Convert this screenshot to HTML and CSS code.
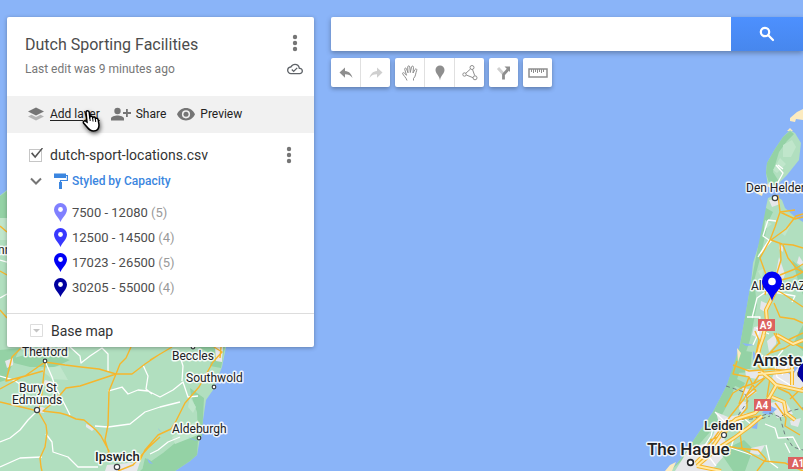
FILE: index.html
```html
<!DOCTYPE html>
<html lang="en">
<head>
<meta charset="utf-8">
<title>Dutch Sporting Facilities</title>
<link rel="stylesheet" href="styles.css">
</head>
<body>
<svg class="map" viewBox="0 0 803 471" preserveAspectRatio="xMidYMid slice" role="img" aria-label="Map">
  <!-- England -->
  <path class="land" d="M-2 197L7 190L40 170L150 180L220 260L226 347L222 367L213 390L206 400L203 420L200 438L197 455L190 461L175 471H-2Z"/>
  <path class="wood" d="M0 196L7 191V218H0ZM14 358L35 352L55 355L70 360L55 367L30 367L14 363ZM0 350L20 348L12 365L6 380L0 382ZM190 388L204 398L202 436L198 440L197 455L190 461L175 471H140L150 462L163 453L180 439L198 434L197 412L191 395ZM198 347H225L221 368L210 366L212 354ZM145 458L160 465L152 471H142Z"/>
  <path class="wood-light" d="M0 218H7V240H0ZM40 369L60 366L68 380L52 379ZM190 425L198 420V435L175 444L172 437ZM190 397L196 407L193 413L188 407Z"/>
  <path class="urban" d="M5 361L13 358V365L7 368ZM36 405L45 408L44 413L36 412ZM86 424L95 428L92 431L86 427ZM107 465L140 462L137 471H105ZM45 380L53 382L50 386L43 384ZM223 347H215L216 361L222 362Z"/>
  <path class="road-white" d="M0 260L7 262M0 298L7 294M45 361L52 377L55 386L66 407L70 415M0 376L14 380L24 387M70 347L80 356L81 363L90 356L102 348L108 354V371M143 365L148 376L146 389L152 394M108 391L122 387L128 394L138 390L148 391L160 397L173 390L183 382L188 397L198 396M36 412L28 420L20 430L10 438L0 442M46 434L52 442L53 452L68 457L78 467L98 467M0 467L20 458L42 457M95 426L108 427L130 424L145 412L160 407L180 402M178 350L183 366L182 381M150 454L158 450L168 442L180 437"/>
  <path class="road-yellow" d="M0 226L7 232M0 271L7 275M0 310L7 318M22 347L12 357L6 381L25 376L45 362L65 365L81 367L99 369L116 374L132 374L145 364L160 354M116 374L120 364L126 358L131 347M116 374L92 382L80 386L66 388L55 401L43 411L60 413L67 415L76 419L84 420L96 430L101 436L109 451L107 455M116 374L109 391L108 425L105 440L109 453M45 363L43 382L41 402L38 411L0 402M0 389L22 377L43 371M38 411L46 425L47 433L45 447L40 458L41 467L42 471M140 460L145 450L158 435L171 429L176 421L185 403L199 387L213 362L222 352L214 347M118 471L133 465L140 457L148 448L160 437M150 360L172 347M221 347L220 358"/>
  <path class="water" d="M158 428L163 434L159 430ZM147 458L153 464L149 463ZM188 437L198 441L193 440Z"/>

  <!-- Netherlands -->
  <path class="sand" d="M790 118L797 112L803 109V120L796 119L795 122L790 121ZM766 183L762 196L756 193ZM787 131L790 128L793 131Z"/>
  <path class="land" d="M790 130L795 133L801 143L799 160L787 175L780 182L776 188L768 187L766 173L767 163L775 149L783 137ZM768 198L775 195L782 200L785 208L795 217L803 222V471H670L680 460L713 412L727 385L735 363L740 345L745 318L748 300L751 283L753 263L758 247L765 227L766 207Z"/>
  <path class="wood" d="M790 131L794 134L787 141L779 152L773 172L778 180L776 187L769 183L766 173L767 163L775 149L783 137ZM766 208L773 212L768 222L761 255L754 281L757 305L750 340L740 370L731 398L717 424L695 449L670 471L680 460L713 412L727 385L740 345L751 283L758 247ZM739 350L752 352L750 372L738 373ZM733 377L745 383L742 389L731 384ZM803 325L794 342L803 351ZM792 260L803 270V295L798 280ZM720 452L744 440L753 449L745 471H733Z"/>
  <path class="wood-light" d="M783 145L792 140L796 147L791 157L783 157ZM780 158L786 164L777 173L773 170ZM758 271L763 269L762 279ZM765 220L772 224L764 230ZM780 232L790 226L785 236Z"/>
  <path class="urban" d="M769 200L779 199L780 204L772 207ZM779 244L783 247L783 252L779 249ZM799 256L803 262L802 266L797 263ZM761 301L768 304L765 312L760 309ZM754 327L765 325L762 340L752 335ZM767 341L777 333L776 344L769 352ZM745 369L765 371L762 380L746 377ZM777 367L803 364V392L780 388L772 378ZM742 387L757 392L745 399ZM716 412L728 417L748 413L738 424L717 426L710 442L718 451L728 445L722 435ZM690 447L714 442L723 457L711 471H675ZM770 403L785 400L793 414L777 418ZM790 421L801 418L798 427L791 425ZM751 448L765 445L759 455L750 453ZM779 257L785 274L780 290L774 284ZM740 401L747 402L743 415L739 409Z"/>
  <path class="sand" d="M737 348L741 353L738 362ZM768 183L771 188L767 186ZM670 465L676 462L672 471H665Z"/>
  <path class="water" d="M742 343L755 345L746 346ZM768 405L777 409L770 415L762 413ZM751 428L758 421L757 429ZM787 372L803 360L792 376ZM753 351L758 356L753 360ZM788 459L793 462L787 463Z"/>
  <path class="border" d="M726 386L744 392L748 401L739 414L737 420L752 419L770 413L780 417L790 411L803 408M780 417L785 435L793 447L803 450M755 421L770 416"/>
  <path class="road-white" d="M776 165L783 173L777 184M778 165L783 169M768 220L776 221M768 220L763 236L769 240L758 257M772 240L759 255M752 318L757 298L764 293L773 292L795 296L792 302M747 317H760L758 334L753 345M756 328L769 334M715 412L728 425L744 420M714 424L711 436L702 450M740 415L752 425M734 437L731 448L752 455M765 424L775 428L778 438L793 437L800 450M785 443L790 453M783 350L774 361L777 377L790 385M791 363L803 369M787 366L782 375M763 355L755 366M697 464L710 458L716 466M766 445L770 462L778 468"/>
  <path class="road-yellow" d="M778 195L780 212L775 227L770 240L760 258L768 280L765 295M780 212L795 219L803 217M780 212L795 210M771 240L786 229L796 216L803 214M771 240L782 244L793 245L803 248M783 245L788 258L797 269L803 272M780 244L781 260L777 273L773 295M780 275L795 269L803 264M770 300L781 280L793 277L803 272M777 290L785 295L803 307M774 303L780 317L794 319L803 323M803 333L788 340M755 331L759 340L756 354L759 367L770 378L767 397M774 333L779 343L770 353L763 358M770 353L785 348L793 343L803 348M780 344L776 333M733 365L749 371L761 370L771 369L790 371M737 361L733 374L749 377L756 391L747 398L747 408L734 423M761 372L752 386L744 399L732 414L714 438L700 454M749 377L739 404M764 378L755 383L743 387L733 393L725 407M775 403L786 418L785 426L800 435M790 399L803 387M745 397L765 378M718 424L735 420L760 416M710 450L726 446L737 448L758 450L766 459L757 471M739 424L742 449L764 461L785 463L803 471M778 388L789 393L803 410M710 440L724 435L730 428"/>
  <path class="motorway" d="M762 340L767 322L766 310L776 290L777 278M757 358L760 346L764 335M761 372L770 379L776 385L803 391M777 384L769 398L755 413L736 419L724 430L713 446L696 463M762 416L749 427L734 438L717 449L697 466M697 466L721 471M792 364V385M758 374L780 372L794 370M772 397L784 402L786 413L795 420M777 335L793 344L803 340"/>
  <path class="motorway-core" d="M762 340L767 322L766 310L776 290L777 278M757 358L760 346L764 335M761 372L770 379L776 385L803 391M777 384L769 398L755 413L736 419L724 430L713 446L696 463M762 416L749 427L734 438L717 449L697 466M697 466L721 471M792 364V385M758 374L780 372L794 370M772 397L784 402L786 413L795 420M777 335L793 344L803 340"/>

  <g class="dots">
    <circle cx="45" cy="361" r="1.8"/><circle cx="37" cy="410" r="2.6"/><circle cx="117" cy="467" r="2.7"/>
    <circle cx="193" cy="347" r="1.8"/><circle cx="214" cy="387" r="1.8"/><circle cx="199" cy="438" r="1.8"/>
    <circle cx="775" cy="198" r="2.7"/><circle cx="724" cy="435" r="2.5"/><circle class="city-dot" cx="690.500" cy="462.500" r="2.9"/>
    <circle class="city-dot" cx="801" cy="374" r="2.9"/>
  </g>
  <g class="shields">
    <rect x="758" y="319" width="17" height="12"/><text x="766" y="329">A9</text>
    <rect x="754" y="399" width="17" height="12"/><text x="762" y="409">A4</text>
    <rect x="788" y="457" width="24" height="12"/><text x="801" y="467">A12</text>
  </g>
  <g class="places">
    <text x="-2" y="254">nn</text>
    <text x="22" y="356">Thetford</text>
    <text x="19" y="392">Bury St</text>
    <text x="12" y="404">Edmunds</text>
    <text x="172" y="360">Beccles</text>
    <text x="186" y="382">Southwold</text>
    <text x="172" y="433">Aldeburgh</text>
    <text x="746" y="192">Den Helder</text>
    <text x="751" y="290">Alkmaa</text>
    <text x="791" y="290">AZ</text>
    <text class="town" x="95" y="461">Ipswich</text>
    <text class="town" x="704" y="430">Leiden</text>
    <text class="city" x="647" y="455">The Hague</text>
    <text class="city" x="753" y="366">Amsterdam</text>
  </g>
  <path class="pin-mid" d="M772 301C770 292 762 289 762 281.500A10 10 0 0 1 782 281.500C782 289 774 292 772 301Z"/><circle cx="772" cy="281.500" r="3.800" fill="#fff"/>
  <path class="pin-dark" d="M808 391C806 383 798 380 798 372A10 10 0 0 1 818 372C818 380 810 383 808 391Z"/>
</svg>

<div class="app">
  <aside class="panel">
    <header class="heading">
      <div class="heading-text">
        <h1>Dutch Sporting Facilities</h1>
        <p>Last edit was 9 minutes ago</p>
      </div>
      <div class="heading-side">
        <button class="plain" aria-label="Map options"><svg class="kebab" viewBox="0 0 6 18"><circle cx="3" cy="3" r="2.200"/><circle cx="3" cy="9" r="2.200"/><circle cx="3" cy="15" r="2.200"/></svg></button>
        <svg class="cloud" viewBox="0 0 24 24" aria-label="Saved"><path d="M19.350 10.040A7.490 7.490 0 0 0 12 4C9.110 4 6.600 5.640 5.350 8.040A5.994 5.994 0 0 0 0 14c0 3.310 2.690 6 6 6h13c2.760 0 5-2.240 5-5 0-2.640-2.050-4.780-4.650-4.960zM19 18H6c-2.210 0-4-1.790-4-4 0-2.050 1.530-3.760 3.560-3.970l1.070-.110.500-.950A5.469 5.469 0 0 1 12 6c2.620 0 4.880 1.860 5.390 4.430l.300 1.500 1.530.110A2.980 2.980 0 0 1 22 15c0 1.650-1.350 3-3 3zm-9-3.820l-2.090-2.090L6.500 13.500 10 17l6.010-6.010-1.410-1.410z"/></svg>
      </div>
    </header>
    <nav class="actions">
      <button class="plain action hovered"><svg class="icon" viewBox="0 0 18 18"><path fill="#b5b5b5" d="M9 15.500L1 11.500L4.500 9.700L9 12L13.500 9.700L17 11.500Z"/><path d="M9 2.500L17 6.500L9 10.600L1 6.500Z"/></svg><span>Add layer</span></button>
      <button class="plain action"><svg class="icon wide" viewBox="0 0 20 18"><circle cx="6.500" cy="6" r="3.200"/><path d="M0 15.500V13.500C0 11.500 4 10.500 6.500 10.500S13 11.500 13 13.500V15.500ZM15 4H16.800V7.100H20V8.900H16.800V12H15V8.900H12V7.100H15Z"/></svg><span>Share</span></button>
      <button class="plain action"><svg class="icon" viewBox="0 0 18 18"><path fill-rule="evenodd" d="M9 3C5 3 1.500 5.500 0 9.300C1.500 13 5 15.500 9 15.500S16.500 13 18 9.300C16.500 5.500 13 3 9 3ZM9 13.400A4.100 4.100 0 1 1 9 5.200A4.100 4.100 0 0 1 9 13.400Z"/><circle cx="9" cy="9.300" r="2.500"/></svg><span>Preview</span></button>
    </nav>
    <section class="layer">
      <div class="layer-head">
        <input type="checkbox" id="layer" checked>
        <label for="layer">dutch-sport-locations.csv</label>
        <button class="plain" aria-label="Layer options"><svg class="kebab" viewBox="0 0 6 18"><circle cx="3" cy="3" r="2.200"/><circle cx="3" cy="9" r="2.200"/><circle cx="3" cy="15" r="2.200"/></svg></button>
      </div>
      <div class="layer-style">
        <button class="plain" aria-label="Collapse"><svg class="chevron" viewBox="0 0 14 16"><path d="M2 5.500L7 10.500L12 5.500"/></svg></button>
        <button class="plain styled"><svg class="roller" viewBox="0 0 14 16"><path d="M0 0.500H12V5H0ZM5 9H8V16H5Z"/><path class="handle" d="M12 2.500H13.400V7.500H6.500V10"/></svg><span>Styled by Capacity</span></button>
      </div>
      <ul class="legend">
        <li><svg class="pin pin-a" viewBox="0 0 13 19"><path d="M6.500 19C5.500 15.500 0 11.500 0 6.500A6.500 6.500 0 0 1 13 6.500C13 11.500 7.500 15.500 6.500 19Z"/><circle cx="6.500" cy="6.500" r="2.400"/></svg><span>7500 - 12080 <small>(5)</small></span></li>
        <li><svg class="pin pin-b" viewBox="0 0 13 19"><path d="M6.500 19C5.500 15.500 0 11.500 0 6.500A6.500 6.500 0 0 1 13 6.500C13 11.500 7.500 15.500 6.500 19Z"/><circle cx="6.500" cy="6.500" r="2.400"/></svg><span>12500 - 14500 <small>(4)</small></span></li>
        <li><svg class="pin pin-mid" viewBox="0 0 13 19"><path d="M6.500 19C5.500 15.500 0 11.500 0 6.500A6.500 6.500 0 0 1 13 6.500C13 11.500 7.500 15.500 6.500 19Z"/><circle cx="6.500" cy="6.500" r="2.400"/></svg><span>17023 - 26500 <small>(5)</small></span></li>
        <li><svg class="pin pin-dark" viewBox="0 0 13 19"><path d="M6.500 19C5.500 15.500 0 11.500 0 6.500A6.500 6.500 0 0 1 13 6.500C13 11.500 7.500 15.500 6.500 19Z"/><circle cx="6.500" cy="6.500" r="2.400"/></svg><span>30205 - 55000 <small>(4)</small></span></li>
      </ul>
    </section>
    <button class="plain base"><svg class="base-icon" viewBox="0 0 13 13"><path fill="#fff" stroke="#ddd" d="M.5 .5H12.500V12.500H.5Z"/><path fill="#c4c4c4" d="M3 5H10L6.500 8.500Z"/></svg><span>Base map</span></button>
  </aside>

  <main class="controls">
    <form class="search">
      <input type="text" aria-label="Search">
      <button type="button" aria-label="Search"><svg viewBox="0 0 16 16"><circle cx="6" cy="6" r="4.200"/><path d="M9.300 9.300L14 14"/></svg></button>
    </form>
    <div class="tools">
      <div class="group">
        <button aria-label="Undo"><svg viewBox="0 0 16 16"><path class="solid" d="M7 2.500V6C11.500 6.400 13.500 9 14.500 13C12.500 10.300 10.500 9.300 7 9.300V12.800L1.500 7.500Z"/></svg></button>
        <button aria-label="Redo"><svg viewBox="0 0 16 16"><path class="solid faded" d="M9 2.500V6C4.500 6.400 2.500 9 1.500 13C3.500 10.300 5.500 9.300 9 9.300V12.800L14.500 7.500Z"/></svg></button>
      </div>
      <div class="group">
        <button aria-label="Pan"><svg viewBox="0 0 16 16"><path class="line" d="M5 15.500C4.200 12.500 1.300 10.500.6 8.600C.4 7.500 1.600 7.300 2.400 8.200L4.500 10.200L2.700 4.300C2.400 3 4 2.500 4.500 3.800L6 7.800L5.700 2C5.700.5 7.600.5 7.800 2L8.300 7.500L9.500 2C9.800.6 11.600.9 11.500 2.300L11 8L13 4.500C13.700 3.300 15.200 4 14.700 5.300C13.500 8.500 13.700 11.500 11.500 13.500V15.500"/></svg></button>
        <button aria-label="Add marker"><svg viewBox="0 0 16 16"><path class="solid" d="M8 15.500C7.500 10.500 3.500 8.800 3.500 5A4.500 4.500 0 0 1 12.500 5C12.500 8.800 8.500 10.500 8 15.500Z"/></svg></button>
        <button aria-label="Draw a line"><svg viewBox="0 0 16 16"><path class="line" d="M8.500 4L3.500 8.500M4.300 10L11 12.700M10.500 4.500L12.700 10.500"/><circle class="line" cx="10" cy="2.500" r="2"/><circle class="line" cx="2.500" cy="9.500" r="1.700"/><circle class="line" cx="13" cy="12.800" r="2"/></svg></button>
      </div>
      <div class="group">
        <button aria-label="Add directions"><svg viewBox="0 0 16 16"><path d="M2 3L7 8.500" fill="none" stroke="#d0d0d0" stroke-width="3"/><path d="M7.500 14.500V9.500L12 4.500" fill="none" stroke="#8e8e8e" stroke-width="2.800"/><path class="solid" d="M8.500 1.500H14V7Z"/></svg></button>
      </div>
      <div class="group">
        <button aria-label="Measure"><svg class="ruler" viewBox="0 0 20 10"><path d="M1 1H19V9H1Z" fill="#fff" stroke="#8e8e8e" stroke-width="1.500"/><path class="line" d="M3.500 1V4M5.500 1V5M7.500 1V4M9.500 1V5M11.500 1V4M13.500 1V5M15.500 1V4"/></svg></button>
      </div>
    </div>
  </main>
</div>

<svg class="cursor" viewBox="0 0 20 24" aria-hidden="true"><path d="M5 13L4 3.500C4 1 7 1 7.200 3.500L7.800 8C8.500 6.700 10.500 7.200 10.700 8.500C11.500 7.500 13.200 8 13.400 9.400C14.500 8.800 16 9.500 16.200 11L17 16C17 19.500 15 22 11.500 22C8 22 6.500 20 5 18L1.500 14C.7 12.300 2.700 11 4 12.300Z"/><path class="fingers" d="M7.800 8L8.200 12M10.700 9L11 12.500M13.400 10L13.700 13"/></svg>
</body>
</html>
```
FILE: styles.css
```css
* { box-sizing: border-box; }

body {
  margin: 0;
  min-height: 100vh;
  overflow: hidden;
  background: #8ab4f8;
  font-family: Roboto, Arial, sans-serif;
  color: #333;
}

/* Map */
.map { position: absolute; inset: 0; width: 100%; height: 100%; }
.land { fill: #b1dfbf; }
.wood { fill: #94d2a5; }
.wood-light { fill: #c0e6cb; }
.urban { fill: #e6e7ea; }
.sand { fill: #fcebc0; }
.water { fill: #8ab4f8; }
.border { fill: none; stroke: #6f7d80; stroke-dasharray: 4 3; }
.road-white, .road-yellow, .motorway, .motorway-core { fill: none; stroke-linejoin: round; }
.road-white { stroke: #fff; stroke-width: 1.3; }
.road-yellow { stroke: #f6b62c; stroke-width: 1.4; }
.motorway { stroke: #f6b62c; stroke-width: 4; }
.motorway-core { stroke: #ffe9a5; stroke-width: 2; }
.dots circle { fill: #fff; stroke: #3c4043; stroke-width: 1.2; }
.dots .city-dot { stroke: #202124; stroke-width: 1.6; }
.shields rect { fill: #dc625f; }
.shields text { fill: #fff; font-size: 10px; font-weight: 700; text-anchor: middle; }
.places text {
  font-size: 12px;
  fill: #202124;
  stroke: #fff;
  stroke-width: 3px;
  stroke-linejoin: round;
  stroke-opacity: .85;
  paint-order: stroke;
}
.places .town { font-size: 13px; font-weight: 500; }
.places .city { font-size: 17px; font-weight: 500; }
.pin-a { fill: #8080ff; }
.pin-b { fill: #3838ff; }
.pin-mid { fill: #0000f5; }
.pin-dark { fill: #0000a0; }

/* Page */
.app {
  position: relative;
  display: grid;
  grid-template-columns: 307px minmax(0, 1fr);
  gap: 17px;
  align-items: start;
  padding: 17px 0 0 7px;
}
button { font-family: inherit; cursor: pointer; }
.plain { display: flex; align-items: center; padding: 0; border: 0; background: none; color: inherit; }
svg { display: block; flex: none; }

.panel {
  background: #fff;
  border-radius: 2px;
  box-shadow: 0 1px 4px rgba(0, 0, 0, .3);
}
.heading { display: flex; justify-content: space-between; padding: 17px 11px 18px 18px; }
h1 { margin: 0; font-size: 16px; line-height: 22px; font-weight: 400; color: #4c4c4c; }
.heading p { margin: 5px 0 0; font-size: 12px; line-height: 17px; color: #777; }
.heading-side { display: flex; flex-direction: column; align-items: center; gap: 9px; }
.kebab { width: 6px; height: 18px; fill: #757575; }
.cloud { width: 16px; height: 16px; fill: #5f6368; }

.actions { display: flex; gap: 11px; height: 37px; padding: 0 0 2px 20px; background: #f1f1f1; }
.action { gap: 5px; font-size: 12px; color: #222; }
.icon { width: 18px; height: 18px; fill: #757575; }
.icon.wide { width: 20px; }
.hovered span { text-decoration: underline; text-underline-offset: 2px; }

.layer { padding: 12px 22px 13px; border-bottom: 1px solid #ddd; }
.layer-head { display: flex; align-items: center; height: 20px; }
.layer-head label { flex: 1; margin-left: 8px; font-size: 14px; }
.layer-head input {
  position: relative;
  appearance: none;
  width: 13px;
  height: 13px;
  margin: 0;
  border: 1px solid #c6c6c6;
}
.layer-head input:checked::before {
  content: "";
  position: absolute;
  inset: -2px -2px 2px 1px;
  background: #555;
  clip-path: polygon(0 55%, 11% 44%, 34% 74%, 92% 0, 100% 8%, 35% 98%);
}
.layer-style { display: flex; align-items: center; gap: 11px; height: 31px; }
.chevron { width: 14px; height: 16px; fill: none; stroke: #757575; stroke-width: 2; }
.styled { gap: 4px; color: #3b86e0; font-size: 12px; font-weight: 500; }
.roller { width: 14px; height: 16px; fill: #3b86e0; }
.roller .handle { fill: none; stroke: #3b86e0; stroke-width: 1.2; }
.legend { margin: 4px 0 0; padding: 0 0 0 25px; list-style: none; }
.legend li { display: flex; align-items: center; gap: 5px; height: 25px; font-size: 13px; color: #4d4d4d; }
.legend small { font-size: inherit; color: #9a9a9a; }
.pin { width: 13px; height: 19px; }
.pin circle { fill: #fff; }

.base { gap: 8px; width: 100%; height: 33px; padding-left: 23px; font-size: 14px; }
.base-icon { width: 13px; height: 13px; }

.search { display: flex; height: 34px; box-shadow: 0 2px 5px rgba(0, 0, 0, .3); }
.search input {
  flex: 1;
  min-width: 0;
  padding: 0 10px;
  border: 0;
  border-radius: 2px 0 0 2px;
  background: #fff;
  font: 14px Roboto, sans-serif;
}
.search button {
  display: grid;
  place-items: center;
  width: 72px;
  padding: 0;
  border: 0;
  background: linear-gradient(#4d90fe, #4787ed);
}
.search svg { width: 16px; height: 16px; fill: none; stroke: #fff; stroke-width: 2.2; stroke-linecap: round; }

.tools { display: flex; gap: 5px; margin-top: 7px; }
.group { display: flex; background: #fff; border-radius: 2px; box-shadow: 0 2px 4px rgba(0, 0, 0, .3); }
.group button {
  display: grid;
  place-items: center;
  box-sizing: content-box;
  width: 29px;
  height: 29px;
  padding: 0;
  border: 0;
  background: none;
}
.group button + button { border-left: 1px solid #e0e0e0; }
.group svg { width: 16px; height: 16px; }
.group .ruler { width: 20px; height: 10px; }
.solid { fill: #8e8e8e; }
.faded { fill: #cfcfcf; }
.line { fill: none; stroke: #8e8e8e; stroke-width: 1; }

.cursor {
  position: absolute;
  left: 82px;
  top: 109px;
  width: 20px;
  height: 24px;
  fill: #fff;
  stroke: #000;
  stroke-width: 1.5;
  filter: drop-shadow(1px 2px 2px rgba(0, 0, 0, .6));
  pointer-events: none;
}
.cursor .fingers { fill: none; stroke-width: 1; }
```
